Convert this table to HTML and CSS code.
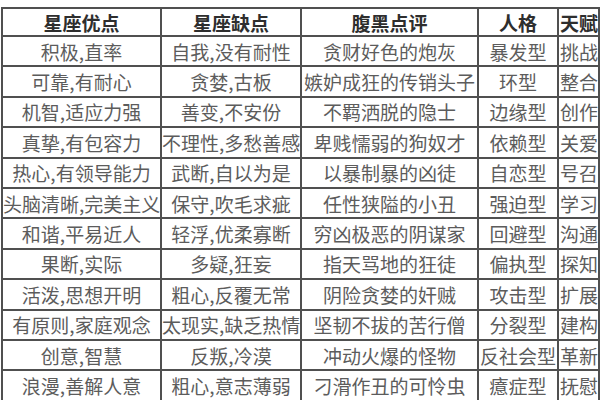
FILE: index.html
```html
<!DOCTYPE html>
<html lang="zh-CN">
<head>
<meta charset="utf-8">
<title>星座</title>
<link rel="stylesheet" href="styles.css">
</head>
<body>
<div class="page">
<table class="grid">
<colgroup>
<col class="c1"><col class="c2"><col class="c3"><col class="c4"><col class="c5">
</colgroup>
<thead>
<tr class="head"><th>星座优点</th><th>星座缺点</th><th>腹黑点评</th><th>人格</th><th class="narrow">天赋</th></tr>
</thead>
<tbody>
<tr><td>积极,直率</td><td>自我,没有耐性</td><td>贪财好色的炮灰</td><td>暴发型</td><td class="narrow">挑战</td></tr>
<tr><td>可靠,有耐心</td><td>贪婪,古板</td><td>嫉妒成狂的传销头子</td><td>环型</td><td class="narrow">整合</td></tr>
<tr><td>机智,适应力强</td><td>善变,不安份</td><td>不羁洒脱的隐士</td><td>边缘型</td><td class="narrow">创作</td></tr>
<tr><td>真挚,有包容力</td><td>不理性,多愁善感</td><td>卑贱懦弱的狗奴才</td><td>依赖型</td><td class="narrow">关爱</td></tr>
<tr><td>热心,有领导能力</td><td>武断,自以为是</td><td>以暴制暴的凶徒</td><td>自恋型</td><td class="narrow">号召</td></tr>
<tr><td>头脑清晰,完美主义</td><td>保守,吹毛求疵</td><td>任性狭隘的小丑</td><td>强迫型</td><td class="narrow">学习</td></tr>
<tr><td>和谐,平易近人</td><td>轻浮,优柔寡断</td><td>穷凶极恶的阴谋家</td><td>回避型</td><td class="narrow">沟通</td></tr>
<tr><td>果断,实际</td><td>多疑,狂妄</td><td>指天骂地的狂徒</td><td>偏执型</td><td class="narrow">探知</td></tr>
<tr><td>活泼,思想开明</td><td>粗心,反覆无常</td><td>阴险贪婪的奸贼</td><td>攻击型</td><td class="narrow">扩展</td></tr>
<tr><td>有原则,家庭观念</td><td>太现实,缺乏热情</td><td>坚韧不拔的苦行僧</td><td>分裂型</td><td class="narrow">建构</td></tr>
<tr><td>创意,智慧</td><td>反叛,冷漠</td><td>冲动火爆的怪物</td><td>反社会型</td><td class="narrow">革新</td></tr>
<tr><td>浪漫,善解人意</td><td>粗心,意志薄弱</td><td>刁滑作丑的可怜虫</td><td>癔症型</td><td class="narrow">抚慰</td></tr>
</tbody>
</table>
</div>
</body>
</html>
```
FILE: styles.css
```css
html, body {
  margin: 0;
  padding: 0;
  background: #ffffff;
  overflow: hidden;
}
.page {
  width: 600px;
  height: 400px;
  overflow: hidden;
  padding-top: 7px;
  padding-left: 1px;
  box-sizing: border-box;
}
.grid {
  border-collapse: collapse;
  table-layout: fixed;
  width: 597px;
  font-family: "Noto Sans CJK SC", "Noto Sans", sans-serif;
  font-size: 19px;
  color: #5c5c5c;
}
.c1 { width: 159px; }
.c2 { width: 140px; }
.c3 { width: 177px; }
.c4 { width: 80px; }
.c5 { width: 41px; }
.grid th, .grid td {
  border: 2px solid #505050;
  padding: 0;
  text-align: center;
  vertical-align: middle;
  white-space: nowrap;
  overflow: hidden;
  line-height: 1;
}
.grid th {
  height: 26px;
  font-weight: 700;
  color: #2e2e2e;
}
.grid td {
  height: 28.4px;
}
.grid .narrow {
  text-align: left;
  padding-left: 1px;
}
```
